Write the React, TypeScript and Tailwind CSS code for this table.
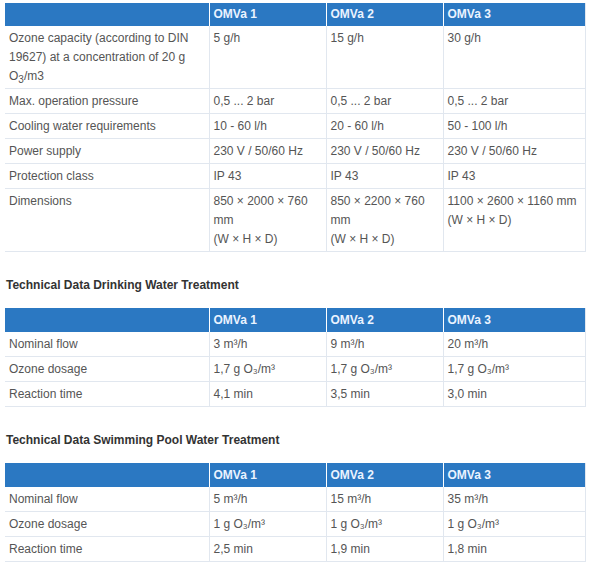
import React from 'react'

type Row = { label: React.ReactNode; values: React.ReactNode[] }

const MODELS = ['OMVa 1', 'OMVa 2', 'OMVa 3']

const generalRows: Row[] = [
  {
    label: (
      <>
        Ozone capacity (according to DIN 19627) at a concentration of 20 g O
        <sub className="text-[10px] leading-none">3</sub>/m3
      </>
    ),
    values: ['5 g/h', '15 g/h', '30 g/h'],
  },
  { label: 'Max. operation pressure', values: ['0,5 ... 2 bar', '0,5 ... 2 bar', '0,5 ... 2 bar'] },
  { label: 'Cooling water requirements', values: ['10 - 60 l/h', '20 - 60 l/h', '50 - 100 l/h'] },
  { label: 'Power supply', values: ['230 V / 50/60 Hz', '230 V / 50/60 Hz', '230 V / 50/60 Hz'] },
  { label: 'Protection class', values: ['IP 43', 'IP 43', 'IP 43'] },
  {
    label: 'Dimensions',
    values: [
      <>
        850 × 2000 × 760 mm
        <br />
        (W × H × D)
      </>,
      <>
        850 × 2200 × 760 mm
        <br />
        (W × H × D)
      </>,
      <>
        1100 × 2600 × 1160 mm
        <br />
        (W × H × D)
      </>,
    ],
  },
]

const drinkingRows: Row[] = [
  { label: 'Nominal flow', values: ['3 m³/h', '9 m³/h', '20 m³/h'] },
  { label: 'Ozone dosage', values: ['1,7 g O₃/m³', '1,7 g O₃/m³', '1,7 g O₃/m³'] },
  { label: 'Reaction time', values: ['4,1 min', '3,5 min', '3,0 min'] },
]

const poolRows: Row[] = [
  { label: 'Nominal flow', values: ['5 m³/h', '15 m³/h', '35 m³/h'] },
  { label: 'Ozone dosage', values: ['1 g O₃/m³', '1 g O₃/m³', '1 g O₃/m³'] },
  { label: 'Reaction time', values: ['2,5 min', '1,9 min', '1,8 min'] },
]

const DataTable: React.FC<{ rows: Row[]; tallHead?: boolean }> = ({ rows, tallHead }) => (
  <table className="w-[581px] table-fixed border-collapse border-r border-[#e1e7ef]">
    <colgroup>
      <col className="w-[204px]" />
      <col className="w-[117px]" />
      <col className="w-[117px]" />
      <col />
    </colgroup>
    <thead>
      <tr className={`${tallHead ? 'h-[24px]' : 'h-[23px]'} bg-[#2b78c2]`}>
        <th className="border-r border-white" />
        {MODELS.map((m, i) => (
          <th
            key={m}
            className={`px-[4px] text-left align-middle text-[12px] font-bold text-[#eaf3ff] ${
              i < 2 ? 'border-r border-white' : ''
            }`}
          >
            {m}
          </th>
        ))}
      </tr>
    </thead>
    <tbody>
      {rows.map((row, r) => (
        <tr key={r} className="border-b border-[#e1e7ef]">
          <td className="border-r border-[#e1e7ef] px-[4px] pt-[3px] pb-[2px] align-top">{row.label}</td>
          {row.values.map((v, i) => (
            <td
              key={i}
              className={`px-[4px] pt-[3px] pb-[2px] align-top ${i < 2 ? 'border-r border-[#e1e7ef]' : ''}`}
            >
              {v}
            </td>
          ))}
        </tr>
      ))}
    </tbody>
  </table>
)

const Heading: React.FC<{ children: React.ReactNode }> = ({ children }) => (
  <h3 className="mt-[25px] mb-[15px] pl-[1px] text-[12px] leading-[16px] font-bold text-[#333333]">
    {children}
  </h3>
)

export default function App() {
  return (
    <div className="min-h-[569px] w-[596px] bg-white pt-[3px] pl-[5px] font-['Liberation_Sans',Arial,sans-serif] text-[12px] leading-[19px] text-[#555555]">
      <DataTable rows={generalRows} />
      <Heading>Technical Data Drinking Water Treatment</Heading>
      <DataTable rows={drinkingRows} tallHead />
      <Heading>Technical Data Swimming Pool Water Treatment</Heading>
      <DataTable rows={poolRows} tallHead />
    </div>
  )
}
